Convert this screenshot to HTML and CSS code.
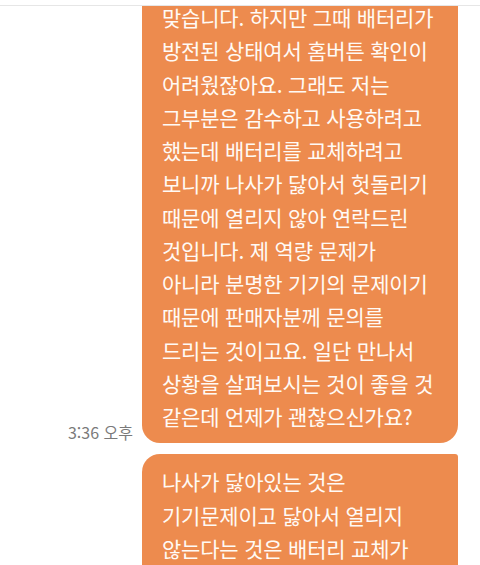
FILE: index.html
```html
<!DOCTYPE html>
<html lang="ko">
<head>
  <meta charset="UTF-8">
  <meta name="viewport" content="width=device-width, initial-scale=1.0">
  <title>채팅</title>
  <link rel="stylesheet" href="styles.css">
</head>
<body>
  <div class="topbar"></div>
  <div class="chat">
    <div class="messages">
      <div class="row">
        <span class="time">3:36 오후</span>
        <div class="bubble first">
          맞습니다. 하지만 그때 배터리가<br>
          방전된 상태여서 홈버튼 확인이<br>
          어려웠잖아요. 그래도 저는<br>
          그부분은 감수하고 사용하려고<br>
          했는데 배터리를 교체하려고<br>
          보니까 나사가 닳아서 헛돌리기<br>
          때문에 열리지 않아 연락드린<br>
          것입니다. 제 역량 문제가<br>
          아니라 분명한 기기의 문제이기<br>
          때문에 판매자분께 문의를<br>
          드리는 것이고요. 일단 만나서<br>
          상황을 살펴보시는 것이 좋을 것<br>
          같은데 언제가 괜찮으신가요?
        </div>
      </div>
      <div class="row">
        <div class="bubble next">
          나사가 닳아있는 것은<br>
          기기문제이고 닳아서 열리지<br>
          않는다는 것은 배터리 교체가<br>
          불가능하다는 것이기 때문에
        </div>
      </div>
    </div>
  </div>
</body>
</html>
```

FILE: styles.css
```css
body {
  margin: 0;
  background-color: #fff;
  font-family: "Noto Sans CJK KR", "Noto Sans", sans-serif;
  height: 565px;
  overflow: hidden;
}
.topbar {
  height: 5px;
  border-bottom: 1px solid #e6e6e6;
}
.chat {
  height: 559px;
  overflow: hidden;
}
.messages {
  margin-top: -16px;
  display: flex;
  flex-direction: column;
  gap: 11px;
}
.row {
  display: flex;
  justify-content: flex-end;
  align-items: flex-end;
  gap: 9px;
  padding-right: 22px;
}
.time {
  font-size: 16px;
  line-height: 20px;
  color: #7a7a7a;
  margin-bottom: 1px;
}
.bubble {
  width: 276px;
  padding: 11px 20px 10px;
  background-color: #ed8b4e;
  color: #fffaf5;
  font-size: 21px;
  line-height: 33.25px;
  letter-spacing: -0.2px;
  white-space: nowrap;
}
.bubble.first {
  border-radius: 0 0 18px 18px;
}
.bubble.next {
  border-radius: 18px 3px 0 0;
}
```
